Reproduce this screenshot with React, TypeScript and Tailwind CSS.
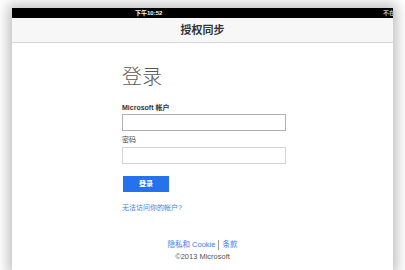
import React from "react";

const font = { fontFamily: '"Liberation Sans", "Noto Sans CJK SC", sans-serif' };

export default function App() {
  return (
    <div className="w-[405px] h-[270px] bg-white overflow-hidden pt-[8px] pl-[12px]" style={font}>
      <div className="w-[381px] h-[262px] bg-white flex flex-col shadow-[0_0_12px_4px_rgba(0,0,0,0.25)]">
        <div className="h-[10px] bg-black relative text-white text-[6px] leading-[10px] font-bold">
          <span className="absolute left-[123px] top-0">下午10:52</span>
          <span className="absolute right-[-2px] top-0 text-[#bbb]">不在</span>
        </div>
        <div className="h-[25px] bg-[#f7f7f7] border-b border-[#d6d6d6] flex items-center justify-center text-[11px] font-bold text-[#333]">
          授权同步
        </div>
        <div className="flex flex-col pl-[110px] pt-[22px]">
          <div className="text-[20px] leading-[24px] text-[#595959] font-light">登录</div>
          <div className="mt-[14px] text-[7px] leading-[10px] font-bold text-[#333]">Microsoft 帐户</div>
          <div className="mt-[1px] w-[164px] h-[17px] border border-[#b0b0b0] bg-white"></div>
          <div className="mt-[4px] text-[7px] leading-[10px] text-[#444]">密码</div>
          <div className="mt-[2px] w-[164px] h-[17px] border border-[#d4d4d4] bg-white"></div>
          <div className="mt-[12px] ml-[1px] w-[46px] h-[16px] bg-[#2672ec] text-white text-[7px] font-bold flex items-center justify-center">
            登录
          </div>
          <div className="mt-[11px] text-[7px] leading-[10px] text-[#3a7ee8]">无法访问你的帐户?</div>
        </div>
        <div className="mt-[26px] flex flex-col items-center text-[7.5px] leading-[12px]">
          <div className="text-[#3a7ee8] flex items-center">
            <span>隐私和 Cookie</span>
            <span className="mx-[3px] w-px h-[10px] bg-[#999]"></span>
            <span>条款</span>
          </div>
          <div className="text-[#555]">©2013 Microsoft</div>
        </div>
      </div>
    </div>
  );
}
